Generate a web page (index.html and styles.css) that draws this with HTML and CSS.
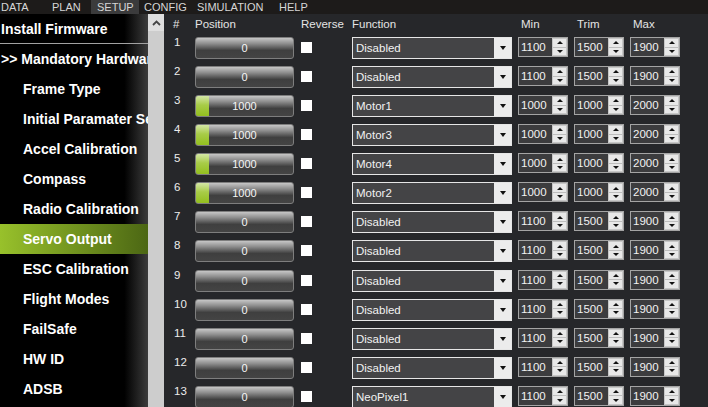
FILE: index.html
```html
<!DOCTYPE html>
<html lang="en">

<head>
    <meta charset="UTF-8">
    <meta name="viewport" content="width=device-width, initial-scale=1.0">
    <title>Servo Output</title>
    <link rel="stylesheet" href="styles.css">
</head>

<body>
    <div class="menubar">
        <span class="menu-item data">DATA</span>
        <span class="menu-item plan">PLAN</span>
        <span class="menu-item setup">SETUP</span>
        <span class="menu-item config">CONFIG</span>
        <span class="menu-item sim">SIMULATION</span>
        <span class="menu-item">HELP</span>
    </div>

    <div class="layout">
        <div class="sidebar">
            <div class="nav-item top first">Install Firmware</div>
            <div class="nav-item top">&gt;&gt; Mandatory Hardware</div>
            <div class="nav-item">Frame Type</div>
            <div class="nav-item">Initial Paramater Setup</div>
            <div class="nav-item">Accel Calibration</div>
            <div class="nav-item">Compass</div>
            <div class="nav-item">Radio Calibration</div>
            <div class="nav-item active">Servo Output</div>
            <div class="nav-item">ESC Calibration</div>
            <div class="nav-item">Flight Modes</div>
            <div class="nav-item">FailSafe</div>
            <div class="nav-item">HW ID</div>
            <div class="nav-item">ADSB</div>
        </div>

        <div class="scrollbar">
            <div class="scroll-up">
                <svg width="9" height="6" viewBox="0 0 9 6"><path d="M1 5 L4.5 1.5 L8 5" fill="none" stroke="#444" stroke-width="1.8"/></svg>
            </div>
        </div>

        <div class="panel">
            <div class="grid head">
                <span>#</span>
                <span>Position</span>
                <span>Reverse</span>
                <span>Function</span>
                <span class="pad">Min</span>
                <span class="pad">Trim</span>
                <span class="pad">Max</span>
            </div>

            <div class="grid row">
                <span class="num">1</span>
                <div class="bar">0</div>
                <div class="check"></div>
                <div class="select"><span class="sel-text">Disabled</span><span class="sel-btn"><i class="down"></i></span></div>
                <div class="spin"><span class="val">1100</span><span class="spin-btns"><b><i class="up"></i></b><b><i class="down sm"></i></b></span></div>
                <div class="spin"><span class="val">1500</span><span class="spin-btns"><b><i class="up"></i></b><b><i class="down sm"></i></b></span></div>
                <div class="spin"><span class="val">1900</span><span class="spin-btns"><b><i class="up"></i></b><b><i class="down sm"></i></b></span></div>
            </div>

            <div class="grid row">
                <span class="num">2</span>
                <div class="bar">0</div>
                <div class="check"></div>
                <div class="select"><span class="sel-text">Disabled</span><span class="sel-btn"><i class="down"></i></span></div>
                <div class="spin"><span class="val">1100</span><span class="spin-btns"><b><i class="up"></i></b><b><i class="down sm"></i></b></span></div>
                <div class="spin"><span class="val">1500</span><span class="spin-btns"><b><i class="up"></i></b><b><i class="down sm"></i></b></span></div>
                <div class="spin"><span class="val">1900</span><span class="spin-btns"><b><i class="up"></i></b><b><i class="down sm"></i></b></span></div>
            </div>

            <div class="grid row">
                <span class="num">3</span>
                <div class="bar on">1000</div>
                <div class="check"></div>
                <div class="select"><span class="sel-text">Motor1</span><span class="sel-btn"><i class="down"></i></span></div>
                <div class="spin"><span class="val">1000</span><span class="spin-btns"><b><i class="up"></i></b><b><i class="down sm"></i></b></span></div>
                <div class="spin"><span class="val">1000</span><span class="spin-btns"><b><i class="up"></i></b><b><i class="down sm"></i></b></span></div>
                <div class="spin"><span class="val">2000</span><span class="spin-btns"><b><i class="up"></i></b><b><i class="down sm"></i></b></span></div>
            </div>

            <div class="grid row">
                <span class="num">4</span>
                <div class="bar on">1000</div>
                <div class="check"></div>
                <div class="select"><span class="sel-text">Motor3</span><span class="sel-btn"><i class="down"></i></span></div>
                <div class="spin"><span class="val">1000</span><span class="spin-btns"><b><i class="up"></i></b><b><i class="down sm"></i></b></span></div>
                <div class="spin"><span class="val">1000</span><span class="spin-btns"><b><i class="up"></i></b><b><i class="down sm"></i></b></span></div>
                <div class="spin"><span class="val">2000</span><span class="spin-btns"><b><i class="up"></i></b><b><i class="down sm"></i></b></span></div>
            </div>

            <div class="grid row">
                <span class="num">5</span>
                <div class="bar on">1000</div>
                <div class="check"></div>
                <div class="select"><span class="sel-text">Motor4</span><span class="sel-btn"><i class="down"></i></span></div>
                <div class="spin"><span class="val">1000</span><span class="spin-btns"><b><i class="up"></i></b><b><i class="down sm"></i></b></span></div>
                <div class="spin"><span class="val">1000</span><span class="spin-btns"><b><i class="up"></i></b><b><i class="down sm"></i></b></span></div>
                <div class="spin"><span class="val">2000</span><span class="spin-btns"><b><i class="up"></i></b><b><i class="down sm"></i></b></span></div>
            </div>

            <div class="grid row">
                <span class="num">6</span>
                <div class="bar on">1000</div>
                <div class="check"></div>
                <div class="select"><span class="sel-text">Motor2</span><span class="sel-btn"><i class="down"></i></span></div>
                <div class="spin"><span class="val">1000</span><span class="spin-btns"><b><i class="up"></i></b><b><i class="down sm"></i></b></span></div>
                <div class="spin"><span class="val">1000</span><span class="spin-btns"><b><i class="up"></i></b><b><i class="down sm"></i></b></span></div>
                <div class="spin"><span class="val">2000</span><span class="spin-btns"><b><i class="up"></i></b><b><i class="down sm"></i></b></span></div>
            </div>

            <div class="grid row">
                <span class="num">7</span>
                <div class="bar">0</div>
                <div class="check"></div>
                <div class="select"><span class="sel-text">Disabled</span><span class="sel-btn"><i class="down"></i></span></div>
                <div class="spin"><span class="val">1100</span><span class="spin-btns"><b><i class="up"></i></b><b><i class="down sm"></i></b></span></div>
                <div class="spin"><span class="val">1500</span><span class="spin-btns"><b><i class="up"></i></b><b><i class="down sm"></i></b></span></div>
                <div class="spin"><span class="val">1900</span><span class="spin-btns"><b><i class="up"></i></b><b><i class="down sm"></i></b></span></div>
            </div>

            <div class="grid row">
                <span class="num">8</span>
                <div class="bar">0</div>
                <div class="check"></div>
                <div class="select"><span class="sel-text">Disabled</span><span class="sel-btn"><i class="down"></i></span></div>
                <div class="spin"><span class="val">1100</span><span class="spin-btns"><b><i class="up"></i></b><b><i class="down sm"></i></b></span></div>
                <div class="spin"><span class="val">1500</span><span class="spin-btns"><b><i class="up"></i></b><b><i class="down sm"></i></b></span></div>
                <div class="spin"><span class="val">1900</span><span class="spin-btns"><b><i class="up"></i></b><b><i class="down sm"></i></b></span></div>
            </div>

            <div class="grid row">
                <span class="num">9</span>
                <div class="bar">0</div>
                <div class="check"></div>
                <div class="select"><span class="sel-text">Disabled</span><span class="sel-btn"><i class="down"></i></span></div>
                <div class="spin"><span class="val">1100</span><span class="spin-btns"><b><i class="up"></i></b><b><i class="down sm"></i></b></span></div>
                <div class="spin"><span class="val">1500</span><span class="spin-btns"><b><i class="up"></i></b><b><i class="down sm"></i></b></span></div>
                <div class="spin"><span class="val">1900</span><span class="spin-btns"><b><i class="up"></i></b><b><i class="down sm"></i></b></span></div>
            </div>

            <div class="grid row">
                <span class="num">10</span>
                <div class="bar">0</div>
                <div class="check"></div>
                <div class="select"><span class="sel-text">Disabled</span><span class="sel-btn"><i class="down"></i></span></div>
                <div class="spin"><span class="val">1100</span><span class="spin-btns"><b><i class="up"></i></b><b><i class="down sm"></i></b></span></div>
                <div class="spin"><span class="val">1500</span><span class="spin-btns"><b><i class="up"></i></b><b><i class="down sm"></i></b></span></div>
                <div class="spin"><span class="val">1900</span><span class="spin-btns"><b><i class="up"></i></b><b><i class="down sm"></i></b></span></div>
            </div>

            <div class="grid row">
                <span class="num">11</span>
                <div class="bar">0</div>
                <div class="check"></div>
                <div class="select"><span class="sel-text">Disabled</span><span class="sel-btn"><i class="down"></i></span></div>
                <div class="spin"><span class="val">1100</span><span class="spin-btns"><b><i class="up"></i></b><b><i class="down sm"></i></b></span></div>
                <div class="spin"><span class="val">1500</span><span class="spin-btns"><b><i class="up"></i></b><b><i class="down sm"></i></b></span></div>
                <div class="spin"><span class="val">1900</span><span class="spin-btns"><b><i class="up"></i></b><b><i class="down sm"></i></b></span></div>
            </div>

            <div class="grid row">
                <span class="num">12</span>
                <div class="bar">0</div>
                <div class="check"></div>
                <div class="select"><span class="sel-text">Disabled</span><span class="sel-btn"><i class="down"></i></span></div>
                <div class="spin"><span class="val">1100</span><span class="spin-btns"><b><i class="up"></i></b><b><i class="down sm"></i></b></span></div>
                <div class="spin"><span class="val">1500</span><span class="spin-btns"><b><i class="up"></i></b><b><i class="down sm"></i></b></span></div>
                <div class="spin"><span class="val">1900</span><span class="spin-btns"><b><i class="up"></i></b><b><i class="down sm"></i></b></span></div>
            </div>

            <div class="grid row">
                <span class="num">13</span>
                <div class="bar">0</div>
                <div class="check"></div>
                <div class="select"><span class="sel-text">NeoPixel1</span><span class="sel-btn"><i class="down"></i></span></div>
                <div class="spin"><span class="val">1100</span><span class="spin-btns"><b><i class="up"></i></b><b><i class="down sm"></i></b></span></div>
                <div class="spin"><span class="val">1500</span><span class="spin-btns"><b><i class="up"></i></b><b><i class="down sm"></i></b></span></div>
                <div class="spin"><span class="val">1900</span><span class="spin-btns"><b><i class="up"></i></b><b><i class="down sm"></i></b></span></div>
            </div>
        </div>
    </div>
</body>

</html>
```

FILE: styles.css
```css
* {
    box-sizing: border-box;
}

body {
    margin: 0;
    width: 708px;
    height: 407px;
    overflow: hidden;
    background: #26272a;
    font-family: "Liberation Sans", Arial, sans-serif;
}

/* top menu */
.menubar {
    height: 14px;
    display: flex;
    background: #1d1b1a;
    color: #d6d6d6;
    font-size: 11px;
    line-height: 14px;
}

.menu-item {
    padding-left: 6px;
}

.menu-item.data {
    width: 46px;
    padding-left: 1px;
}

.menu-item.plan {
    width: 45px;
}

.menu-item.setup {
    width: 48px;
    background: #3b3b3c;
}

.menu-item.config {
    width: 52px;
    padding-left: 5px;
}

.menu-item.sim {
    width: 82px;
}

.layout {
    display: flex;
    height: 393px;
}

/* left navigation */
.sidebar {
    width: 148px;
    flex: none;
    overflow: hidden;
    background: linear-gradient(to right, #000 84%, #3c3c3c);
}

.nav-item {
    height: 30px;
    line-height: 31px;
    padding-left: 23px;
    color: #fff;
    font-size: 14px;
    font-weight: bold;
    white-space: nowrap;
}

.nav-item.top {
    padding-left: 1px;
}

.nav-item.first {
    line-height: 30px;
    border-bottom: 1px solid #a2a2a2;
}

.nav-item.active {
    background: linear-gradient(to right, #98c12b, #4c6714);
}

.scrollbar {
    width: 16px;
    flex: none;
    background: #cdcdcd;
}

.scroll-up {
    height: 17px;
    display: flex;
    align-items: center;
    justify-content: center;
    background: #dedede;
}

/* servo table */
.panel {
    flex: 1;
    padding-left: 9px;
}

.grid {
    display: grid;
    grid-template-columns: 22px 106px 51px 166px 56px 56px 56px;
}

.head {
    height: 23px;
    padding-top: 3px;
    color: #e4e4e4;
    font-size: 11.5px;
    line-height: 14px;
}

.head .pad {
    padding-left: 3px;
}

.row {
    height: 29.07px;
    align-items: start;
}

.num {
    margin-top: -2px;
    padding-left: 1px;
    color: #ececec;
    font-size: 11.5px;
    line-height: 14px;
}

.bar {
    width: 99px;
    height: 22px;
    border: 1px solid #7e7e7e;
    border-radius: 3px;
    background: linear-gradient(#c6c6c6 0%, #8e8e8e 28%, #3f3f3f 62%, #444 100%);
    color: #f6f6f6;
    font-size: 11px;
    line-height: 21px;
    text-align: center;
}

.bar.on {
    background:
        linear-gradient(#d4e6a6 0%, #a8cc48 45%, #93bf1e 100%) no-repeat 0 0 / 13px 100%,
        linear-gradient(#c6c6c6 0%, #8e8e8e 28%, #3f3f3f 62%, #444 100%);
}

.check {
    width: 11px;
    height: 11px;
    margin-top: 5px;
    background: #fff;
}

.select {
    width: 160px;
    height: 22px;
    display: flex;
    border: 1px solid #e6e6e6;
    background: #444446;
}

.sel-text {
    flex: 1;
    padding-left: 3px;
    color: #f2f2f2;
    font-size: 11.5px;
    line-height: 20px;
}

.sel-btn {
    width: 17px;
    display: flex;
    align-items: center;
    justify-content: center;
    background: #ececec;
}

.down {
    width: 0;
    height: 0;
    border-left: 3.5px solid transparent;
    border-right: 3.5px solid transparent;
    border-top: 4px solid #111;
}

.up {
    width: 0;
    height: 0;
    border-left: 3px solid transparent;
    border-right: 3px solid transparent;
    border-bottom: 3px solid #111;
}

.down.sm {
    border-left-width: 3px;
    border-right-width: 3px;
    border-top-width: 3px;
}

.spin {
    width: 50px;
    height: 20px;
    display: flex;
    border: 1px solid #a4a4a4;
    background: #3c3c3e;
}

.val {
    flex: 1;
    padding-left: 2px;
    color: #f2f2f2;
    font-size: 11.5px;
    line-height: 18px;
}

.spin-btns {
    width: 15px;
    display: flex;
    flex-direction: column;
    border: 1px solid #c6c6c6;
    background: #e8e8e8;
}

.spin-btns b {
    flex: 1;
    display: flex;
    align-items: center;
    justify-content: center;
}

.spin-btns b + b {
    border-top: 1px solid #bdbdbd;
}
```
